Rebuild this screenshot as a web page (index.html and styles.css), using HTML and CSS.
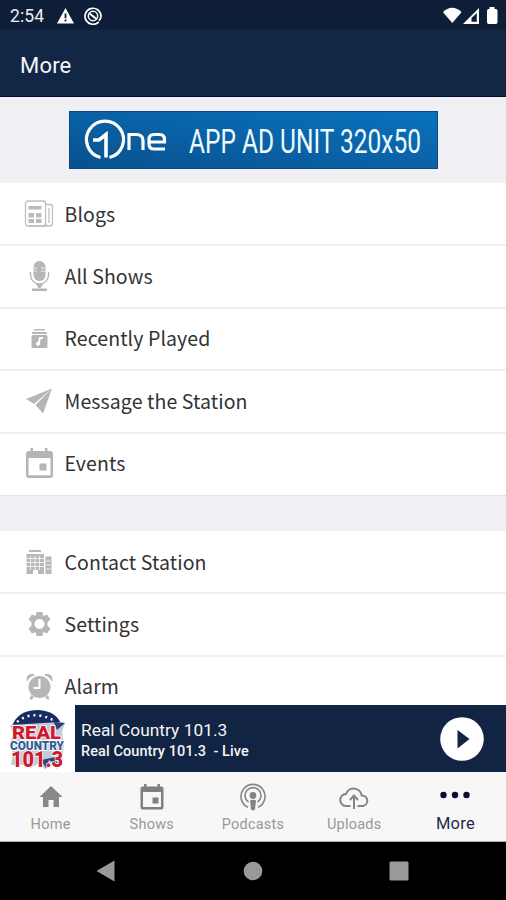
FILE: index.html
```html
<!DOCTYPE html>
<html lang="en">
<head>
<meta charset="utf-8">
<title>More</title>
<link rel="stylesheet" href="styles.css">
</head>
<body>
<div class="screen">
  <header class="status">
    <span class="clock">2:54</span>
    <svg class="warn" width="17" height="16" viewBox="0 0 17 16"><path fill="#fff" d="M8.500 0 17 15.500H0z"/><path fill="#0f1e38" d="M7.600 5.500h1.800v4.800H7.600zM7.600 11.500h1.800v1.900H7.600z"/></svg>
    <svg class="sync" width="18" height="18" viewBox="0 0 18 18" fill="none" stroke="#fff"><path stroke-width="1.700" d="M14.800 14.800A8 8 0 1 1 17 9c0 2-.8 3.500-2 4.700"/><circle cx="9" cy="9" r="4.700" stroke-width="1.500"/><path stroke-width="2" d="m5.500 6.500 7 5.500"/></svg>
    <svg class="signals" width="56" height="18" viewBox="0 0 56 18"><path fill="#fff" d="M0 5.200C5-.9 13.500-.9 18.500 5.200L9.300 16z"/><path fill="#fff" fill-rule="evenodd" d="M20 17 36 1v16zM28.500 14.800V11l5.300-5v8.800z"/><path fill="#fff" d="M46.500 0h5v2h1.300q1.700 0 1.700 1.700v11.600q0 1.700-1.700 1.700h-7.100q-1.700 0-1.700-1.700V3.700Q44 2 45.700 2h.8z"/></svg>
  </header>
  <div class="title">More</div>
  <main class="content">
    <div class="ad">
      <svg class="banner" width="369" height="58" viewBox="0 0 369 58">
        <defs><linearGradient id="blue" x1="0" y1="1" x2="1" y2="0"><stop offset="0" stop-color="#08508e"/><stop offset=".5" stop-color="#0a62a6"/><stop offset="1" stop-color="#0873bd"/></linearGradient></defs>
        <path fill="url(#blue)" d="M0 0h369v58H0z"/>
        <path class="frame" d="M.5.500h368v57H.5z"/>
        <g class="mark"><path d="M31.500 46.500A18.500 18.500 0 1 1 40.500 46.500" stroke-width="3.200"/><path d="M24 29h6l7-5.500v23" stroke-width="3.600"/><path d="M60 39V23.500h7q7 0 7 6V39M96 38H85q-5 0-5-5v-4.500q0-5 5-5h5.500q5 0 5 5V31H81" stroke-width="3.200"/></g>
        <text class="ad-text" x="120" y="41.500" textLength="232" lengthAdjust="spacingAndGlyphs">APP AD UNIT 320x50</text>
      </svg>
    </div>
    <nav class="list">
      <div class="row"><svg class="icon" viewBox="0 0 30 30"><g fill="none" stroke="#c0c0c0" stroke-width="1.300"><rect x="1.500" y="2" width="20" height="25" rx="2.500"/><path d="M21.500 5.500h5q2 0 2 2V24q0 3-3 3h-1q-3 0-3-3M25 9v15M5 27h20"/></g><path fill="#bbb" d="M4.500 7h13v3.500h-13zM4.500 14H10v4.500H4.500zM12 14h5.500v4.500H12zM4.500 20H10v4H4.500zM12 20h5.500v4H12z"/></svg><span>Blogs</span></div>
      <div class="row"><svg class="icon" viewBox="0 0 30 30"><rect x="9.500" y="0" width="12" height="20" rx="6" fill="#b6b6b6"/><path stroke="#eee" stroke-width="1.200" d="M9 7h4M17 7h4M9 10h4M17 10h4"/><path fill="none" stroke="#b6b6b6" stroke-width="1.300" d="M6.500 11v3a9 9 0 0 0 18 0v-3"/><path fill="#b6b6b6" d="M12 23h7l-2.500 4h-2zM8 27.500h15V30H8z"/></svg><span>All Shows</span></div>
      <div class="row"><svg class="icon" viewBox="0 0 30 30"><path fill="#b8b8b8" d="M10 6h11v1.500H10zM8 9h15v2H8z"/><rect x="7.500" y="12" width="16" height="13" rx="1.500" fill="#b5b5b5"/><path fill="#fff" d="M15 14h4v2h-2.400l-.8 5.500a2 2 0 1 1-1.600-2.600z"/></svg><span>Recently Played</span></div>
      <div class="row"><svg class="icon" viewBox="0 0 30 30"><path fill="#b6b6b6" d="M28 2.500 2 13 10 18zM28 2.500 11.500 19 19 27.500z"/></svg><span>Message the Station</span></div>
      <div class="row"><svg class="icon" viewBox="0 0 30 30"><path fill="#b4b4b4" fill-rule="evenodd" d="M6.500 0H9v3h12V0h2.500v3H26q3 0 3 3v21q0 3-3 3H5q-3 0-3-3V6q0-3 3-3h1.500zM4.500 10v17.300h22V10z"/><path fill="#b4b4b4" d="M15.500 15.500h7v7h-7z"/></svg><span>Events</span></div>
    </nav>
    <nav class="list second">
      <div class="row"><svg class="icon" viewBox="0 0 30 30"><path fill="#b8b8b8" d="M5 3h12v2H5zM2.500 7H20v20h-6v-4H9v4H2.500zM21.500 9.500h6V27h-6z"/><path stroke="#fff" stroke-width=".8" d="M2 11.500h18M2 15.500h18M2 19.500h18M6.500 9v14M11 9v14M15.500 9v14M22.500 14h4M22.500 18h4M22.500 22h4"/></svg><span>Contact Station</span></div>
      <div class="row"><svg class="icon" viewBox="0 0 30 30"><path fill="#b6b6b6" d="M12.500 3h6l.8 4 3.700-1.600 3.500 5.200-3 2.700v3.400l3 2.700-3.500 5.200-3.700-1.600-.8 4h-6l-.8-4L8 24.600l-3.500-5.200 3-2.700v-3.400l-3-2.700L8 5.400 11.700 7z"/><circle cx="15.500" cy="15" r="5" fill="#fff"/></svg><span>Settings</span></div>
      <div class="row"><svg class="icon" viewBox="0 0 30 30"><g fill="#b6b6b6"><circle cx="15.500" cy="16" r="11"/><path d="M2.500 10Q2 2 9.500 3l1.500 1Q5 6 3.500 10zM28.500 10q.5-8-7-7L20 4q6 2 7.500 6zM7 24l3 2-2 2.500H5.500zM24 24l-3 2 2 2.500h2.500z"/></g><path fill="none" stroke="#fff" stroke-width="2" d="M15.500 8v9H9.500"/></svg><span>Alarm</span></div>
    </nav>
  </main>
  <section class="player">
    <svg class="cover" width="75" height="67" viewBox="0 0 75 67">
      <path fill="#172d61" d="M12 21Q18 5 38 5q20 1 24 17l-8 2H15z"/>
      <path fill="none" stroke="#fff" stroke-width="2.500" stroke-dasharray="2 4" d="M17 17Q33 4 55 16"/>
      <path fill="#c5cbd4" d="m10 20 50-3 5 1-3 9 2 12-2 17-5 8-5-4-7 4-7-5-8 4-4-3H11l2-12-4-8 4-10z"/>
      <path fill="#26457a" d="m52 13 3 4 10 1-8 7zM41 55l5 8 3-8 9 7-2-10z"/>
      <text class="logo-red" x="12" y="34" font-size="19" textLength="49" lengthAdjust="spacingAndGlyphs">REAL</text>
      <text class="logo-blue" x="10" y="44.500" font-size="12" textLength="54" lengthAdjust="spacingAndGlyphs">COUNTRY</text>
      <text class="logo-red" x="11" y="61.500" font-size="22" textLength="52" lengthAdjust="spacingAndGlyphs">101.3</text>
    </svg>
    <div class="track"><div class="station">Real Country 101.3</div><div class="live">Real Country 101.3&nbsp; - Live</div></div>
    <svg class="play" width="44" height="44" viewBox="0 0 44 44"><circle cx="22" cy="22" r="21.800" fill="#fff"/><path fill="#112443" d="m17.500 13 12 9-12 9.500z"/></svg>
  </section>
  <nav class="tabs">
    <div class="tab"><svg viewBox="0 0 30 30"><path fill="#888" d="M15 4 26.500 15H23v10h-5.500v-7h-5v7H7V15H3.500z"/></svg><span>Home</span></div>
    <div class="tab"><svg viewBox="0 0 30 30"><path fill="#808080" fill-rule="evenodd" d="M7 2h2.500v2.500h11V2H23v2.500h1.500q2 0 2 2v19q0 2-2 2h-19q-2 0-2-2v-19q0-2 2-2H7zM6 10v15h18V10z"/><path fill="#808080" d="M15.500 15.500h6v6h-6z"/></svg><span>Shows</span></div>
    <div class="tab"><svg viewBox="0 0 30 30"><g fill="none" stroke="#858585" stroke-width="1.600"><path d="M10 25.300A12 12 0 1 1 20 25.300M10.500 20.200a8 8 0 1 1 9 0"/></g><circle cx="15" cy="13.500" r="3.400" fill="#858585"/><path fill="#858585" d="M12 18.500q3-1.500 6 0l-1 9q-2 2-4 0z"/></svg><span>Podcasts</span></div>
    <div class="tab"><svg viewBox="0 0 30 30" fill="none" stroke="#858585" stroke-width="2"><path d="M11.500 24H7.500A6 6 0 0 1 7 12a8.200 8.200 0 0 1 15.800 1.500A5.300 5.300 0 0 1 24 24h-5.500M15 27V14M11 18l4-4.500 4 4.500"/></svg><span>Uploads</span></div>
    <div class="tab active"><svg viewBox="0 0 30 30"><g fill="#080d35"><circle cx="3.500" cy="13" r="3.200"/><circle cx="15" cy="13" r="3.200"/><circle cx="26.500" cy="13" r="3.200"/></g></svg><span>More</span></div>
  </nav>
  <footer class="system">
    <svg viewBox="0 0 20 22"><path fill="#999" d="M18.500.500v21L.5 11z"/></svg>
    <svg viewBox="0 0 20 22"><circle cx="10" cy="11" r="9.300" fill="#999"/></svg>
    <svg viewBox="0 0 20 22"><rect x=".5" y="1.500" width="19" height="19" rx="1.500" fill="#999"/></svg>
  </footer>
</div>
</body>
</html>
```

FILE: styles.css
```css
* { box-sizing: border-box; }
body { margin: 0; background: #fff; font-family: Roboto, "Liberation Sans", sans-serif; }
.screen { width: 506px; height: 900px; display: flex; flex-direction: column; overflow: hidden; }
svg { display: block; flex: none; }
.status { height: 30px; flex: none; background: #0f1e38; display: flex; align-items: center; padding: 1px 7px 0 10px; color: #eee; }
.clock { font-size: 17.500px; width: 47px; letter-spacing: .1px; }
.sync { margin-left: 10px; }
.signals { margin-left: auto; }
.title { height: 67px; flex: none; background: #122646; border-bottom: 1px solid #050b34; color: #f5f5f5; font-size: 22px; line-height: 71px; padding-left: 20px; letter-spacing: .2px; }
.content { height: 608px; flex: none; overflow: hidden; background: #efeff4; }
.ad { height: 86px; padding: 14px 0 0 69px; }
.banner { overflow: visible; }
.frame { fill: none; stroke: #084985; }
.mark { fill: none; stroke: #fff; }
.ad-text { fill: #eefaff; font: 33px Roboto, sans-serif; }
.list { background: #fff; border-bottom: 1px solid #e3e3e6; }
.second { margin-top: 35px; }
.row { height: 62.400px; display: flex; align-items: center; gap: 10.500px; padding: 0 0 1px 24px; color: #333; font: 19.500px/30px "Noto Sans CJK SC", sans-serif; letter-spacing: .1px; border-bottom: 2px solid #f0f0f2; }
.row:first-child { height: 63.400px; padding: 1px 0 0 24px; }
.second .row:first-child { padding-top: 0; }
.row:last-child { height: 61.400px; padding-bottom: 0; border-bottom-color: #fff; }
.icon { width: 30px; height: 30px; }
.player { height: 67px; flex: none; display: flex; align-items: center; background: linear-gradient(90deg, #fff 75px, #112443 75px); }
.track { margin-left: 6px; color: #f4f4f4; }
.station { font-size: 17.300px; line-height: 22px; padding-top: 4px; letter-spacing: .05px; }
.live { font-size: 14.500px; line-height: 22px; font-weight: 500; letter-spacing: .08px; }
.play { margin: 0 22px 0 auto; }
.logo-red { fill: #cf1930; stroke: #fff; stroke-width: 1.500px; paint-order: stroke; font-family: Roboto, sans-serif; font-weight: 900; }
.logo-blue { fill: #315c95; stroke: #fff; stroke-width: 2px; paint-order: stroke; font-family: Roboto, sans-serif; font-weight: 900; }
.tabs { height: 70px; flex: none; display: grid; grid-template-columns: repeat(5, 1fr); background: #f7f7f7; border-bottom: 1px solid #aaa; }
.tab { display: flex; flex-direction: column; align-items: center; padding-top: 10px; color: #999; font-size: 14.500px; line-height: 20px; letter-spacing: .25px; }
.tab svg { width: 30px; height: 30px; margin-bottom: 3px; }
.active { color: #252849; font-size: 16.500px; }
.active svg { margin-bottom: 2px; }
.system { height: 58px; flex: none; background: #000; display: flex; justify-content: space-between; align-items: center; padding: 0 97px 0 96px; }
.system svg { width: 20px; height: 22px; }
```
